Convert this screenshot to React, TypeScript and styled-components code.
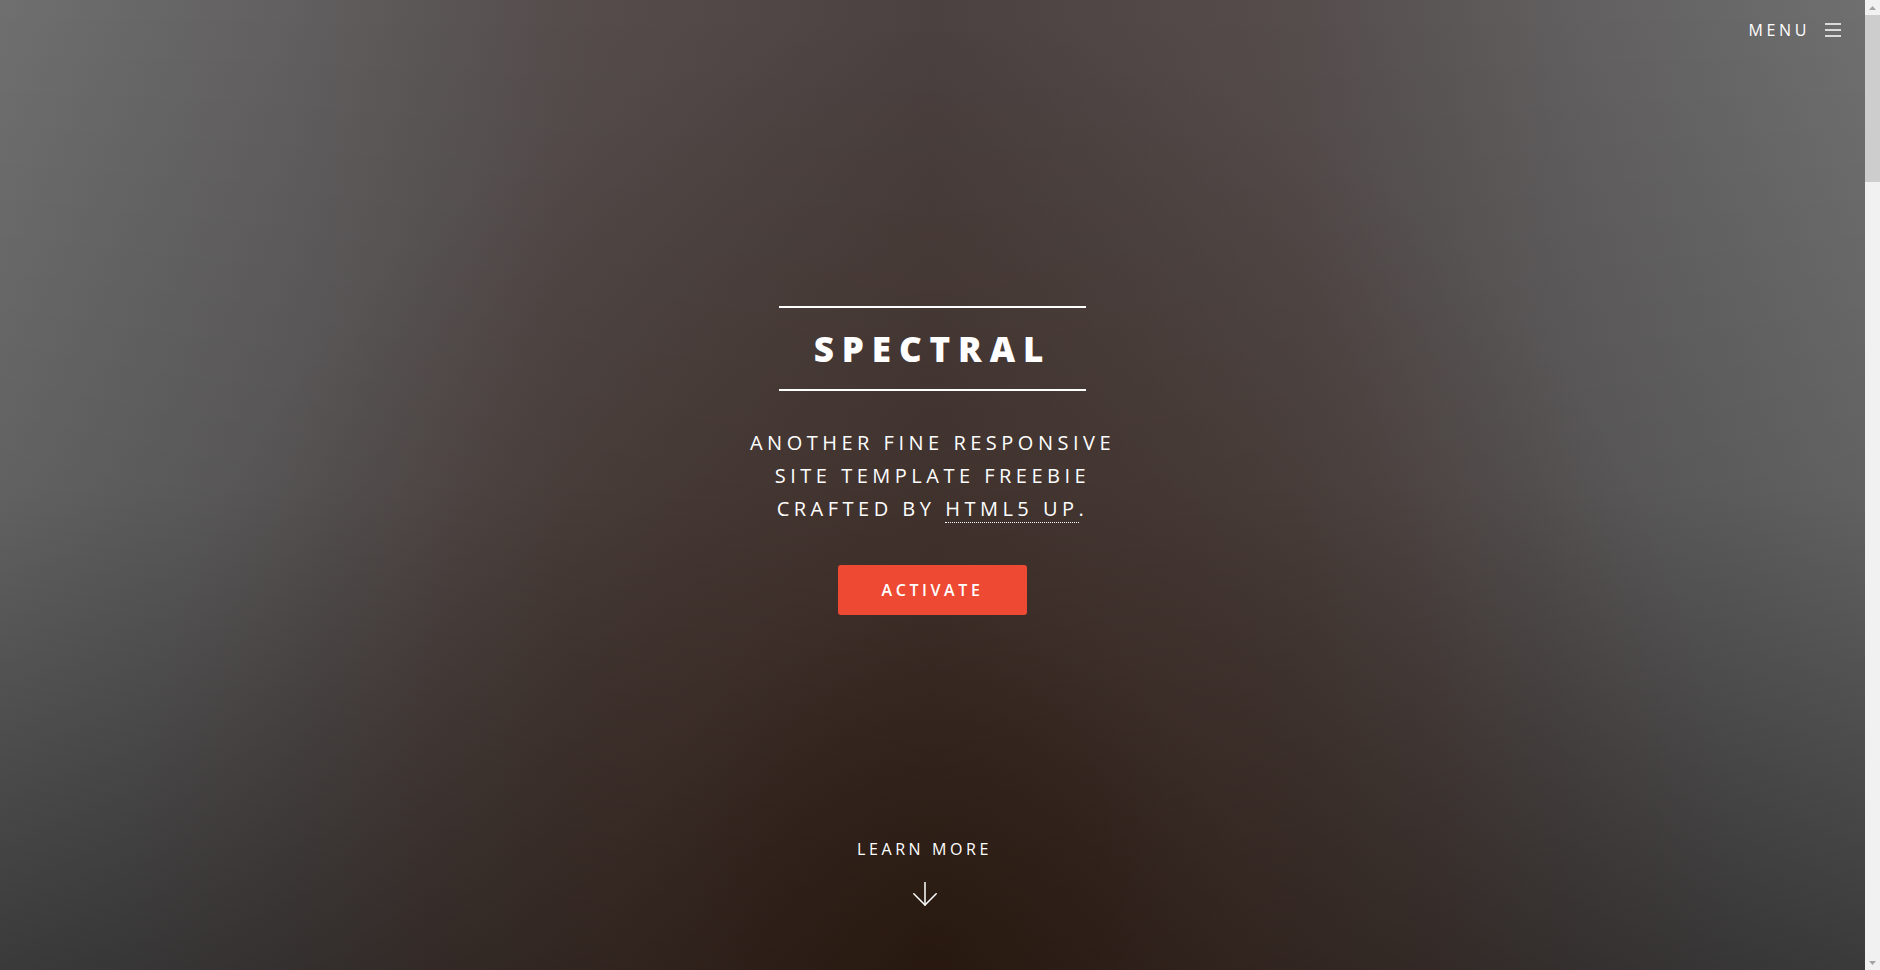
import React from "react";
import styled, { createGlobalStyle } from "styled-components";

const GlobalStyle = createGlobalStyle`
  * { box-sizing: border-box; }
  html, body { margin: 0; padding: 0; }
  body {
    background: #2e3842;
    color: #fff;
    font-family: "Open Sans", "Liberation Sans", sans-serif;
    font-size: 20px;
    font-weight: 400;
    letter-spacing: 0.075em;
    line-height: 1.65;
  }
`;

/* Window shell: page content + the browser's vertical scrollbar */
const Shell = styled.div`
  display: flex;
  align-items: flex-start;
`;

const Page = styled.div`
  flex: 1;
  min-width: 0;
`;

const ScrollRail = styled.div`
  position: sticky;
  top: 0;
  flex: 0 0 15px;
  width: 15px;
  height: 100vh;
  display: flex;
  flex-direction: column;
  background: #f1f1f1;
`;

const ScrollButton = styled.div`
  flex: 0 0 15px;
  height: 15px;
  display: flex;
  align-items: center;
  justify-content: center;
`;

const ScrollTrack = styled.div`
  flex: 1;
  display: flex;
  flex-direction: column;
`;

const ScrollThumb = styled.div`
  height: 167px;
  background: #cdcdcd;
`;

const Banner = styled.section`
  height: 100vh;
  display: flex;
  flex-direction: column;
  background-color: #2f2019;
  background-image:
    radial-gradient(820px 950px at 50% 100%, rgba(40, 20, 8, 0.7) 0%, rgba(60, 32, 18, 0.35) 40%, rgba(60, 32, 18, 0) 100%),
    linear-gradient(to bottom, rgba(0, 0, 0, 0) 0%, rgba(0, 0, 0, 0.12) 50%, rgba(0, 0, 0, 0.48) 100%),
    linear-gradient(to right, #6f6f70 0%, #626061 15%, #554d4c 30%, #4b4140 50%, #554d4c 70%, #626061 85%, #6f6f70 100%);
`;

const Header = styled.header`
  height: 60px;
  flex: 0 0 60px;
  display: flex;
  justify-content: flex-end;
  align-items: center;
  padding-right: 24px;
`;

const MenuLink = styled.a`
  display: flex;
  align-items: center;
  gap: 15px;
  height: 60px;
  line-height: 60px;
  color: #fff;
  text-decoration: none;
  font-size: 16px;
  letter-spacing: 0.225em;
  text-transform: uppercase;
`;

const Main = styled.div`
  flex: 1;
  display: flex;
  flex-direction: column;
  align-items: center;
  justify-content: center;
  padding-top: 27px;
  text-align: center;
`;

const Title = styled.h2`
  display: inline-block;
  margin: 0 0 35px 0;
  padding: 10.25px 35px;
  border-top: 2px solid #fff;
  border-bottom: 2px solid #fff;
  font-size: 35px;
  font-weight: 800;
  letter-spacing: 0.225em;
  line-height: 1.75em;
  text-transform: uppercase;
  color: #fff;
`;

const Tagline = styled.p`
  margin: 0 0 40px 0;
  font-size: 20px;
  letter-spacing: 0.225em;
  line-height: 1.65em;
  text-transform: uppercase;
`;

const InlineLink = styled.a`
  color: inherit;
  text-decoration: none;
  border-bottom: dotted 1px #fff;
`;

const Button = styled.a<{ $primary?: boolean }>`
  display: inline-block;
  height: 50px;
  line-height: 50px;
  padding: 0 44px;
  border-radius: 3px;
  background: ${(p) => (p.$primary ? "#ed4933" : "transparent")};
  box-shadow: ${(p) => (p.$primary ? "none" : "inset 0 0 0 2px #fff")};
  color: #fff;
  text-decoration: none;
  font-size: 16px;
  font-weight: 600;
  letter-spacing: 0.225em;
  text-transform: uppercase;
  white-space: nowrap;
`;

const More = styled.a`
  flex: 0 0 136px;
  height: 136px;
  width: 256px;
  align-self: flex-start;
  margin-left: calc(50% - 136px);
  display: flex;
  flex-direction: column;
  align-items: center;
  padding-top: 2px;
  color: #fff;
  text-decoration: none;
  font-size: 16px;
  letter-spacing: 0.225em;
  line-height: 1.65em;
  text-transform: uppercase;
`;

const ArrowWrap = styled.span`
  display: block;
  width: 24px;
  height: 24px;
  margin-top: 20px;
  line-height: 0;
`;

/* Sections below the fold */
const Section = styled.section<{ $bg: string; $h: number }>`
  background: ${(p) => p.$bg};
  min-height: ${(p) => p.$h}px;
  display: flex;
  flex-direction: column;
  align-items: center;
  justify-content: center;
  padding: 80px 40px;
  text-align: center;
`;

const SectionTitle = styled.h2`
  margin: 0 0 20px 0;
  font-size: 27px;
  font-weight: 800;
  letter-spacing: 0.225em;
  line-height: 1.75em;
  text-transform: uppercase;
  max-width: 900px;
`;

const SectionText = styled.p`
  margin: 0 0 30px 0;
  max-width: 900px;
  color: rgba(255, 255, 255, 0.75);
`;

const Actions = styled.div`
  display: flex;
  gap: 20px;
`;

const FooterText = styled.p`
  margin: 0;
  font-size: 16px;
  color: rgba(255, 255, 255, 0.5);
  letter-spacing: 0.225em;
  text-transform: uppercase;
`;

const spotlights = [
  { title: "Arcu accumsan", bg: "#353c45" },
  { title: "Tempus adipiscing", bg: "#2e3842" },
  { title: "Nullam dignissim", bg: "#353c45" },
];

export default function App() {
  return (
    <>
      <GlobalStyle />
      <Shell>
        <Page>
          <Banner>
            <Header>
              <MenuLink href="#menu">
                <span>Menu</span>
                <svg width="16" height="14" viewBox="0 0 16 14" aria-hidden="true">
                  <g stroke="#fff" strokeWidth="1.5">
                    <line x1="0" y1="1" x2="16" y2="1" />
                    <line x1="0" y1="7" x2="16" y2="7" />
                    <line x1="0" y1="13" x2="16" y2="13" />
                  </g>
                </svg>
              </MenuLink>
            </Header>
            <Main>
              <Title>Spectral</Title>
              <Tagline>
                Another fine responsive
                <br />
                site template freebie
                <br />
                crafted by <InlineLink href="#">HTML5 UP</InlineLink>.
              </Tagline>
              <Button $primary href="#">
                Activate
              </Button>
            </Main>
            <More href="#one">
              <span>Learn More</span>
              <ArrowWrap>
                <svg width="24" height="24" viewBox="0 0 24 24" aria-hidden="true">
                  <g stroke="#fff" strokeWidth="1.5" fill="none" strokeLinecap="round">
                    <path d="M12 0.5 V23" />
                    <path d="M0.8 11.8 L12 23 L23.2 11.8" />
                  </g>
                </svg>
              </ArrowWrap>
            </More>
          </Banner>

          <Section id="one" $bg="#21b2a6" $h={600}>
            <SectionTitle>Arcu aliquet vel lobortis ata nisl eget augue amet aliquet nisl cep donec</SectionTitle>
            <SectionText>
              Aliquam ut ex ut augue consectetur interdum. Donec amet imperdiet eleifend fringilla tincidunt.
              Nullam dui leo Aenean mi ligula, rhoncus ullamcorper.
            </SectionText>
          </Section>

          {spotlights.map((s) => (
            <Section key={s.title} $bg={s.bg} $h={520}>
              <SectionTitle>{s.title}</SectionTitle>
              <SectionText>
                Aliquam ut ex ut augue consectetur interdum. Donec hendrerit imperdiet. Mauris eleifend fringilla
                nullam aenean mi ligula.
              </SectionText>
            </Section>
          ))}

          <Section $bg="#4c5c96" $h={1400}>
            <SectionTitle>Magna sed ullamcorper</SectionTitle>
            <SectionText>
              Aliquam ut ex ut augue consectetur interdum endrerit imperdiet amet eleifend fringilla.
            </SectionText>
          </Section>

          <Section $bg="#2e3842" $h={560}>
            <SectionTitle>Arcue ut vel commodo</SectionTitle>
            <SectionText>
              Aliquam ut ex ut augue consectetur interdum endrerit imperdiet amet eleifend fringilla.
            </SectionText>
            <Actions>
              <Button $primary href="#">
                Activate
              </Button>
              <Button href="#">Learn More</Button>
            </Actions>
          </Section>

          <Section $bg="#1d242a" $h={370}>
            <FooterText>© Untitled · Design: HTML5 UP</FooterText>
          </Section>
        </Page>

        <ScrollRail aria-hidden="true">
          <ScrollButton>
            <svg width="7" height="4" viewBox="0 0 7 4">
              <path d="M0 4 L3.5 0 L7 4 Z" fill="#a3a3a3" />
            </svg>
          </ScrollButton>
          <ScrollTrack>
            <ScrollThumb />
          </ScrollTrack>
          <ScrollButton>
            <svg width="7" height="4" viewBox="0 0 7 4">
              <path d="M0 0 L3.5 4 L7 0 Z" fill="#a3a3a3" />
            </svg>
          </ScrollButton>
        </ScrollRail>
      </Shell>
    </>
  );
}
